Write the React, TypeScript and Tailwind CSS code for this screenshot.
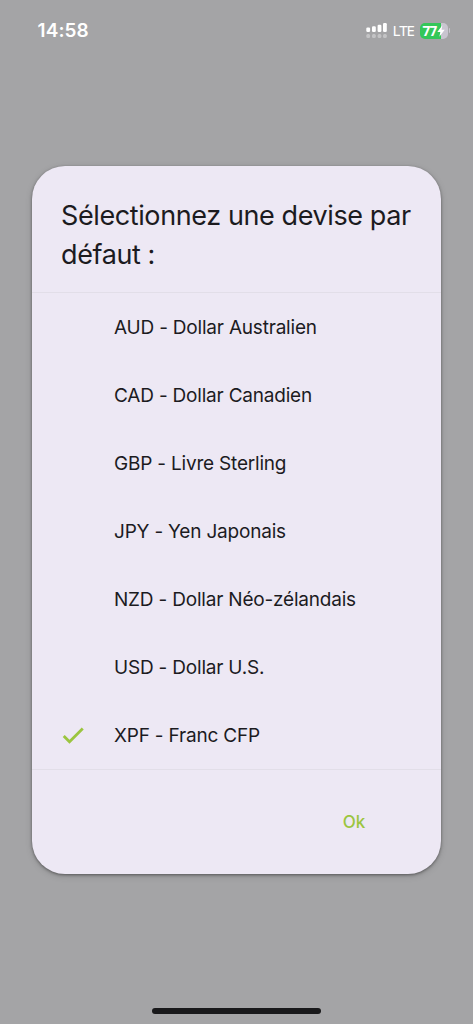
const currencies = [
  { code: "AUD", label: "Dollar Australien" },
  { code: "CAD", label: "Dollar Canadien" },
  { code: "GBP", label: "Livre Sterling" },
  { code: "JPY", label: "Yen Japonais" },
  { code: "NZD", label: "Dollar Néo-zélandais" },
  { code: "USD", label: "Dollar U.S." },
  { code: "XPF", label: "Franc CFP" },
];

const SignalIcon = () => (
  <svg width="22" height="16" viewBox="0 0 22 16" fill="currentColor">
    <rect x="0.3" y="4.5" width="3.8" height="4.5" rx="1.2" />
    <rect x="6" y="3.3" width="3.8" height="5.7" rx="1.2" />
    <rect x="11.6" y="1.8" width="3.8" height="7.2" rx="1.2" />
    <rect x="17" y="0" width="3.8" height="9" rx="1.2" />
    <g opacity="0.35">
      <rect x="0.3" y="11" width="3.8" height="4" rx="1.5" />
      <rect x="6" y="11" width="3.8" height="4" rx="1.5" />
      <rect x="11.6" y="11" width="3.8" height="4" rx="1.5" />
      <rect x="17" y="11" width="3.8" height="4" rx="1.5" />
    </g>
  </svg>
);

const Battery = () => (
  <div className="flex items-center">
    <div className="flex h-4 w-7 items-center rounded-[5px] bg-linear-to-r from-[#34c759] from-75% to-[#c9c5d0] to-75% pl-[3px]">
      <span className="w-[14px] font-['Noto_Sans',sans-serif] text-[13.5px] leading-4 font-bold tracking-[-0.7px]">
        77
      </span>
      <svg width="8" height="12" viewBox="0 0 8 12" fill="currentColor">
        <path d="M5.4.3.3 6.9h3L2.4 11.7l5.3-7H4.5z" />
      </svg>
    </div>
    <span className="ml-px h-[5px] w-[1.5px] rounded-r-full bg-[#c9c5d0]" />
  </div>
);

const StatusBar = () => (
  <div className="flex h-[61px] shrink-0 items-center justify-between pl-[37.5px] pr-[23px] text-white">
    <span className="pt-[2px] text-[19px] font-semibold tracking-[0.1px]">14:58</span>
    <div className="flex items-center">
      <SignalIcon />
      <span className="ml-[5px] w-[27px] pb-px font-['Noto_Sans',sans-serif] text-[15px] leading-4 tracking-[-0.9px]">
        LTE
      </span>
      <Battery />
    </div>
  </div>
);

const App = () => {
  const selected = "XPF";

  return (
    <div className="flex h-[1024px] w-[473px] flex-col overflow-hidden bg-[#a4a4a6] font-['Inter',sans-serif] text-[#1c1b1f]">
      <StatusBar />
      <div className="mx-8 mt-[105px] flex h-[708px] shrink-0 flex-col rounded-[33px] bg-[#ede8f4] shadow-[0_1px_3px_rgba(0,0,0,0.4),0_2px_7px_rgba(0,0,0,0.15)]">
        <h1 className="h-[126px] px-[29px] pt-[30px] text-[27px] leading-[39px] tracking-[-0.4px]">
          Sélectionnez une devise par défaut :
        </h1>
        <ul className="border-y border-[#e2dee8]">
          {currencies.map(({ code, label }) => (
            <li key={code} className="flex h-[68px] items-center pl-[27px]">
              <span className="w-[55px]">
                {code === selected && (
                  <svg width="28" height="28" viewBox="0 0 24 24" fill="#9bc53f">
                    <path d="M9 16.1 4.9 12l-1.7 1.7L9 19.5 21.2 7.2l-1.7-1.7z" />
                  </svg>
                )}
              </span>
              <span className="pt-[2px] text-[19px] tracking-[-0.2px]">
                {code} - {label}
              </span>
            </li>
          ))}
        </ul>
        <button className="mt-10 mr-[76px] self-end text-[17px] font-medium tracking-[-0.2px] text-[#9bc53f]">
          Ok
        </button>
      </div>
      <div className="mx-auto mt-auto mb-[10px] h-[6px] w-[169px] rounded-full bg-[#19191b]" />
    </div>
  );
};

export default App;
